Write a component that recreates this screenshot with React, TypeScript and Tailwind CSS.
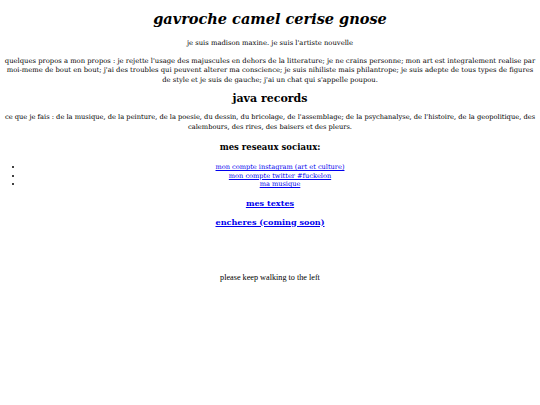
export default function App() {
  const body = { fontFamily: '"DejaVu Serif", Georgia, serif' };
  return (
    <div className="min-h-[405px] bg-white px-[3px] text-center text-[6.8px] leading-[9.5px] text-black" style={body}>
      <h1 className="pt-[9px] text-[14.5px] font-bold italic leading-[20px]">gavroche camel cerise gnose</h1>
      <p className="mt-[10px]">je suis madison maxine. je suis l'artiste nouvelle</p>
      <p className="mt-[8px]">
        quelques propos a mon propos : je rejette l'usage des majuscules en dehors de la litterature; je ne crains personne; mon art est integralement realise par moi-meme de bout en bout; j'ai des troubles qui peuvent alterer ma conscience; je suis nihiliste mais philantrope; je suis adepte de tous types de figures de style et je suis de gauche; j'ai un chat qui s'appelle poupou.
      </p>
      <h2 className="mt-[7px] text-[11px] font-bold leading-[14px]">java records</h2>
      <p className="mt-[7px] text-[6.7px]">
        ce que je fais : de la musique, de la peinture, de la poesie, du dessin, du bricolage, de l'assemblage; de la psychanalyse, de l'histoire, de la geopolitique, des calembours, des rires, des baisers et des pleurs.
      </p>
      <h3 className="mt-[10px] text-[8.5px] font-bold leading-[10px]">mes reseaux sociaux:</h3>
      <ul className="mt-[11px] list-disc pl-[20px] text-[6.6px] text-[#0000ee]">
        <li className="leading-[8.5px] marker:text-black">
          <a href="#" className="underline">mon compte instagram (art et culture)</a>
        </li>
        <li className="leading-[8.5px] marker:text-black">
          <a href="#" className="underline">mon compte twitter #fuckelon</a>
        </li>
        <li className="leading-[8.5px] marker:text-black">
          <a href="#" className="underline">ma musique</a>
        </li>
      </ul>
      <h3 className="mt-[8px] text-[8.1px] font-bold leading-[12px]">
        <a href="#" className="text-[#0000ee] underline">mes textes</a>
      </h3>
      <h3 className="mt-[7px] text-[8.1px] font-bold leading-[12px]">
        <a href="#" className="text-[#0000ee] underline">encheres (coming soon)</a>
      </h3>
      <p className="mt-[45px] text-[8.2px]" style={{ fontFamily: '"Liberation Serif", "Times New Roman", serif' }}>
        please keep walking to the left
      </p>
    </div>
  );
}
